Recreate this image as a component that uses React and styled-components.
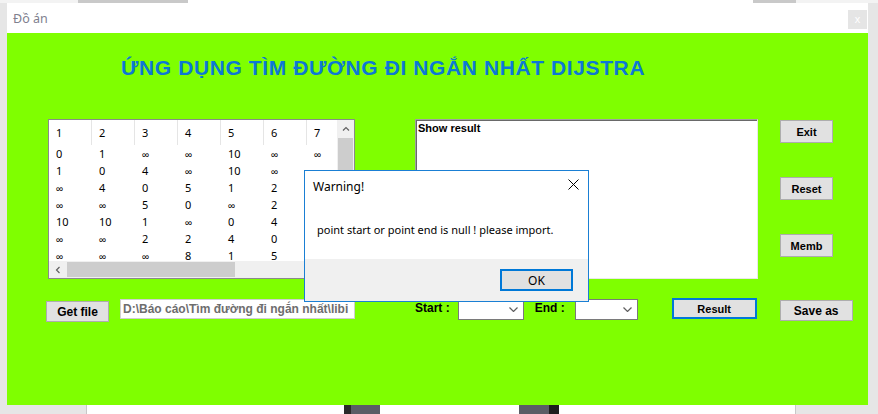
import React from 'react'
import styled, { createGlobalStyle } from 'styled-components'

const GlobalStyle = createGlobalStyle`
  html, body { margin: 0; padding: 0; }
  body {
    background: #e6e6e6;
    width: 878px;
    height: 414px;
    overflow: hidden;
    font-family: "Liberation Sans", Arial, sans-serif;
  }
  * { box-sizing: border-box; }
`

const Page = styled.div`
  position: relative;
  width: 878px;
  height: 414px;
  display: flex;
  flex-direction: column;
`

/* strip of the grid header that lies behind the window */
const BackStrip = styled.div`
  display: flex;
  height: 3px;
  overflow: hidden;
  background: #f3f3f3;
`

const StripPart = styled.div`
  display: flex;
  width: ${p => p.$w}px;
  padding-left: ${p => p.$pl || 0}px;
  background: ${p => p.$bg};
`

const StripDigit = styled.span`
  width: ${p => p.$w || 33.6}px;
  font-size: 10px;
  line-height: 10px;
  margin-top: -8px;
  color: #6a6a6a;
  text-align: center;
`

const Window = styled.div`
  margin-left: 7px;
  width: 861px;
  height: 402px;
  display: flex;
  flex-direction: column;
`

const TitleBar = styled.div`
  height: 30px;
  background: #fff;
  display: flex;
  justify-content: space-between;
  align-items: center;
  padding: 0 1px 0 6px;
`

const TitleText = styled.span`
  font-family: "Noto Sans", sans-serif;
  font-size: 12.5px;
  color: #80808e;
`

const CloseBox = styled.div`
  align-self: flex-start;
  margin-top: 7px;
  width: 19px;
  height: 19px;
  background: #e5e5e5;
  color: #fff;
  font-size: 11px;
  line-height: 18px;
  text-align: center;
`

const Client = styled.div`
  flex: 1;
  background: #7fff00;
  padding: 23px 0 0 39px;
  display: flex;
  flex-direction: column;
`

const Heading = styled.h1`
  margin: 0 0 0 75px;
  font-size: 21px;
  line-height: 24px;
  font-weight: bold;
  letter-spacing: 0.6px;
  color: #0d78d5;
  white-space: nowrap;
`

const MainRow = styled.div`
  display: flex;
  margin-top: 39px;
  height: 160px;
`

const ListBox = styled.div`
  margin-left: 2px;
  width: 307px;
  height: 160px;
  border: 1px solid #8a8a8a;
  background: #fff;
  display: grid;
  grid-template-columns: 1fr 17px;
  grid-template-rows: 1fr 17px;
  font-family: "Noto Sans", sans-serif;
  font-size: 11px;
  color: #000;
`

const ListBody = styled.div`
  overflow: hidden;
`

const GridRow = styled.div`
  display: flex;
  height: ${p => p.$h}px;
  line-height: ${p => p.$h}px;
  white-space: nowrap;
`

const Cell = styled.div`
  flex: 0 0 43px;
  width: 43px;
  padding-left: 7px;
  border-right: ${p => (p.$head ? '1px solid #e5e5e5' : 'none')};
`

const Inf = styled.span`
  font-family: "Liberation Sans", sans-serif;
  font-size: 10px;
`

const VScroll = styled.div`
  background: #f0f0f0;
  display: flex;
  flex-direction: column;
  align-items: center;
`

const ArrowBtn = styled.div`
  width: 17px;
  height: 17px;
  flex: 0 0 17px;
  display: flex;
  align-items: center;
  justify-content: center;
`

const VThumb = styled.div`
  width: 15px;
  height: 84px;
  margin-top: 1px;
  background: #cdcdcd;
`

const HScroll = styled.div`
  background: #f0f0f0;
  display: flex;
`

const HThumb = styled.div`
  width: 168px;
  height: 15px;
  margin: 1px 0 0 1px;
  background: #cdcdcd;
`

const Corner = styled.div`
  background: #f0f0f0;
`

const ResultBox = styled.div`
  margin-left: 60px;
  width: 343px;
  height: 160px;
  background: #fff;
  border: 1px solid;
  border-color: #a0a0a0 #e8e8e8 #e8e8e8 #a0a0a0;
  box-shadow: inset 1px 1px 0 #696969;
  padding: 2px 0 0 2px;
  font-size: 11px;
  line-height: 13px;
  font-weight: bold;
`

const SideButtons = styled.div`
  margin-left: 22px;
  padding-top: 1px;
  display: flex;
  flex-direction: column;
  gap: 34px;
`

const WinButton = styled.button`
  flex: 0 0 auto;
  width: ${p => p.$w}px;
  height: ${p => p.$h || 23}px;
  margin-left: ${p => p.$ml || 0}px;
  margin-top: ${p => p.$dy || 0}px;
  padding: 0;
  background: #e1e1e1;
  border: ${p => (p.$focus ? '2px solid #0078d7' : '1px solid #adadad')};
  font-family: "Liberation Sans", Arial, sans-serif;
  font-size: ${p => p.$fs || 11}px;
  font-weight: bold;
  color: #000;
`

const BottomRow = styled.div`
  display: flex;
  align-items: flex-start;
  margin-top: 19px;
`

const PathBox = styled.div`
  flex: 0 0 auto;
  margin: 1px 0 0 11px;
  width: 235px;
  height: 20px;
  background: #fff;
  border: 1px solid #cfcfcf;
  padding-left: 2px;
  overflow: hidden;
  white-space: nowrap;
  font-size: 12px;
  line-height: 18px;
  font-weight: bold;
  color: #6d6d6d;
`

const Label = styled.span`
  flex: 0 0 auto;
  margin-left: ${p => p.$ml}px;
  font-size: 12px;
  line-height: 21px;
  font-weight: bold;
  white-space: nowrap;
`

const Combo = styled.div`
  flex: 0 0 auto;
  margin: 1px 0 0 ${p => p.$ml}px;
  width: ${p => p.$w}px;
  height: 21px;
  background: #fff;
  border: 1px solid #7a7a7a;
  display: flex;
  align-items: center;
  justify-content: flex-end;
  padding-right: 5px;
`

const BelowBar = styled.div`
  display: flex;
  height: 9px;
  padding-left: 86px;
`

const BackPanel = styled.div`
  width: 710px;
  background: #fff;
  border-left: 1px solid #c8c8c8;
  border-right: 1px solid #c8c8c8;
  display: flex;
`

const DarkBlock = styled.div`
  width: ${p => p.$w}px;
  margin-left: ${p => p.$ml}px;
  background: ${p => p.$bg};
`

const Dialog = styled.div`
  position: absolute;
  left: 304px;
  top: 170px;
  width: 285px;
  height: 132px;
  background: #fff;
  border: 1px solid #1a7fd4;
  display: flex;
  flex-direction: column;
  font-family: "Noto Sans", sans-serif;
  font-size: 11px;
  color: #000;
`

const DialogTitle = styled.div`
  height: 30px;
  display: flex;
  align-items: center;
  justify-content: space-between;
  padding: 0 9px 0 8px;
  font-size: 12px;
`

const DialogBody = styled.div`
  flex: 1;
  padding: 21px 0 0 12px;
  line-height: 16px;
  white-space: nowrap;
`

const DialogFooter = styled.div`
  height: 42px;
  background: #f0f0f0;
  display: flex;
  justify-content: flex-end;
  padding: 10px 15px 0 0;
`

const OkButton = styled.button`
  width: 73px;
  height: 22px;
  padding: 0;
  background: #e1e1e1;
  border: 2px solid #0078d7;
  font-family: "Noto Sans", sans-serif;
  font-size: 12px;
  color: #000;
`

const INF = '∞'
const rows = [
  ['0', '1', INF, INF, '10', INF, INF],
  ['1', '0', '4', INF, '10', INF, INF],
  [INF, '4', '0', '5', '1', '2', INF],
  [INF, INF, '5', '0', INF, '2', INF],
  ['10', '10', '1', INF, '0', '4', INF],
  [INF, INF, '2', '2', '4', '0', INF],
  [INF, INF, INF, '8', '1', '5', INF],
]

const Chevron = ({ dir }) => {
  const pts = {
    up: '1,4.5 4,1.5 7,4.5',
    left: '4.5,1 1.5,4 4.5,7',
    down: '0.5,0.5 4.5,4.5 8.5,0.5',
  }[dir]
  const size = dir === 'down' ? [9, 5] : dir === 'up' ? [8, 6] : [6, 8]
  return (
    <svg width={size[0]} height={size[1]} viewBox={`0 0 ${size[0]} ${size[1]}`}>
      <polyline points={pts} fill="none" stroke={dir === 'down' ? '#5f5f5f' : '#606060'} strokeWidth="1.2" />
    </svg>
  )
}

const App = () => {
  return (
    <Page>
      <GlobalStyle />
      <BackStrip>
        <StripPart $w={78} $bg="#f3f3f3" />
        <StripPart $w={110} $bg="#c9c9c9">
          {['2', '3', '4'].map(d => (
            <StripDigit key={d} $w={34}>{d}</StripDigit>
          ))}
        </StripPart>
        <StripPart $w={565} $bg="#fff" $pl={17}>
          {Array.from({ length: 16 }, (_, i) => (
            <StripDigit key={i}>{i + 1}</StripDigit>
          ))}
        </StripPart>
        <StripPart $w={43} $bg="#c9c9c9">
          <StripDigit $w={20}>17</StripDigit>
        </StripPart>
      </BackStrip>

      <Window>
        <TitleBar>
          <TitleText>Đồ án</TitleText>
          <CloseBox>x</CloseBox>
        </TitleBar>
        <Client>
          <Heading>ỨNG DỤNG TÌM ĐƯỜNG ĐI NGẮN NHẤT DIJSTRA</Heading>

          <MainRow>
            <ListBox>
              <ListBody>
                <GridRow $h={25}>
                  {['1', '2', '3', '4', '5', '6', '7', '8'].map(h => (
                    <Cell key={h} $head>{h}</Cell>
                  ))}
                </GridRow>
                {rows.map((r, i) => (
                  <GridRow key={i} $h={17}>
                    {r.map((v, j) => (
                      <Cell key={j}>{v === INF ? <Inf>{v}</Inf> : v}</Cell>
                    ))}
                  </GridRow>
                ))}
              </ListBody>
              <VScroll>
                <ArrowBtn><Chevron dir="up" /></ArrowBtn>
                <VThumb />
              </VScroll>
              <HScroll>
                <ArrowBtn><Chevron dir="left" /></ArrowBtn>
                <HThumb />
              </HScroll>
              <Corner />
            </ListBox>

            <ResultBox>Show result</ResultBox>

            <SideButtons>
              <WinButton $w={53}>Exit</WinButton>
              <WinButton $w={53}>Reset</WinButton>
              <WinButton $w={53}>Memb</WinButton>
            </SideButtons>
          </MainRow>

          <BottomRow>
            <WinButton $w={63} $h={21} $dy={3} $fs={12}>Get file</WinButton>
            <PathBox>D:\Báo cáo\Tìm đường đi ngắn nhất\libi</PathBox>
            <Label $ml={60}>Start :</Label>
            <Combo $ml={8} $w={66}><Chevron dir="down" /></Combo>
            <Label $ml={11}>End :</Label>
            <Combo $ml={10} $w={63}><Chevron dir="down" /></Combo>
            <WinButton $w={85} $h={21} $ml={34} $focus>Result</WinButton>
            <WinButton $w={73} $h={21} $ml={23} $dy={2} $fs={12}>Save as</WinButton>
          </BottomRow>
        </Client>
      </Window>

      <BelowBar>
        <BackPanel>
          <DarkBlock $w={36} $ml={257} $bg="linear-gradient(to right, #2a2a2a 0 7px, #5a5d66 7px)" />
          <DarkBlock $w={40} $ml={139} $bg="linear-gradient(to right, #5a5d66 0 30px, #1e1e1e 30px)" />
        </BackPanel>
      </BelowBar>

      <Dialog>
        <DialogTitle>
          <span>Warning!</span>
          <svg width="11" height="11" viewBox="0 0 11 11" style={{ marginBottom: 3 }}>
            <path d="M0.5 0.5 L10.5 10.5 M10.5 0.5 L0.5 10.5" stroke="#000" strokeWidth="1" />
          </svg>
        </DialogTitle>
        <DialogBody>point start or point end is null ! please import.</DialogBody>
        <DialogFooter>
          <OkButton>OK</OkButton>
        </DialogFooter>
      </Dialog>
    </Page>
  )
}

export default App
